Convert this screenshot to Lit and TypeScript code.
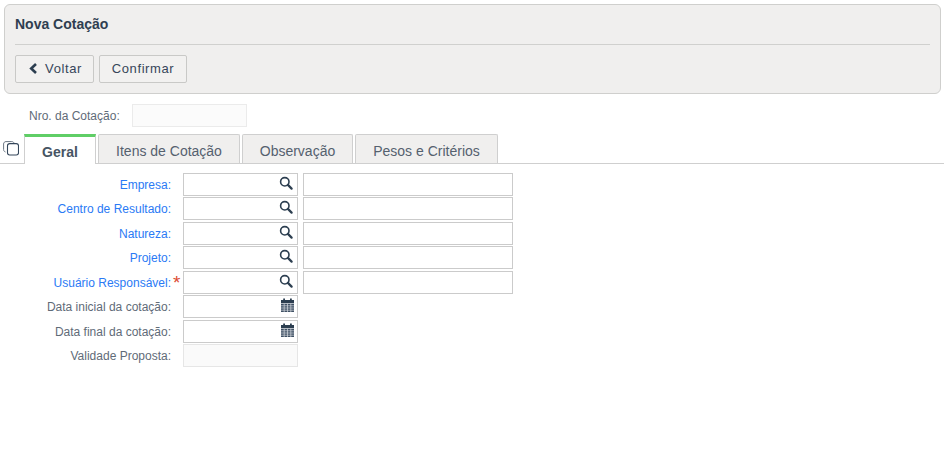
import { LitElement, html, css, svg } from "lit";
import { customElement } from "lit/decorators.js";

const search = svg`<svg class="ico lookup" width="14" height="14" viewBox="0 0 14 14" fill="none"><circle cx="5.8" cy="5.8" r="4.2" stroke="#2c3e50" stroke-width="1.6"/><path d="M8.9 8.9L12.6 12.6" stroke="#2c3e50" stroke-width="2.2" stroke-linecap="round"/></svg>`;
const calendar = svg`<svg class="ico" width="13" height="14" viewBox="0 0 13 14"><path fill="#2c3e50" d="M0 2h2.2V0.6h1.8V2h5V0.6h1.8V2H13v3H0z"/><path fill="#3f5064" d="M0 5.6h13V14H0z"/><path stroke="#d5dae0" stroke-width="0.7" d="M0 7.8h13M0 10h13M0 12.2h13M3.2 5.6V14M6.5 5.6V14M9.8 5.6V14"/></svg>`;
const copy = svg`<svg width="16" height="15" viewBox="0 0 16 15" fill="none"><path d="M2.5 11C1.3 10.6 0.6 9.8 0.6 8.6V3C0.6 1.6 1.6 0.6 3 0.6H8.8C10 0.6 10.8 1.2 11.1 2.3" stroke="#6b7683" stroke-width="1"/><rect x="4.5" y="2.6" width="11" height="11.4" rx="2.2" stroke="#34465a" stroke-width="1.1"/></svg>`;

type Row = { label: string; link?: boolean; req?: boolean; kind: "lookup" | "date" | "off" };
const rows: Row[] = [
  { label: "Empresa:", link: true, kind: "lookup" },
  { label: "Centro de Resultado:", link: true, kind: "lookup" },
  { label: "Natureza:", link: true, kind: "lookup" },
  { label: "Projeto:", link: true, kind: "lookup" },
  { label: "Usuário Responsável:", link: true, req: true, kind: "lookup" },
  { label: "Data inicial da cotação:", kind: "date" },
  { label: "Data final da cotação:", kind: "date" },
  { label: "Validade Proposta:", kind: "off" },
];

@customElement("app-root")
export class AppRoot extends LitElement {
  static styles = css`
    :host { display: block; width: 944px; height: 464px; background: #fff; overflow: hidden;
      font-family: "Liberation Sans", Arial, sans-serif; font-size: 12px; color: #5f6b78; box-sizing: border-box; padding-top: 4px; }
    * { box-sizing: border-box; }
    .panel { margin: 0 3px 0 4px; height: 90px; background: #f0efee; border: 1px solid #cfcfcd; border-radius: 6px; padding: 0 10px; }
    .title { height: 40px; line-height: 39px; font-size: 14px; font-weight: 700; color: #2f3e50; border-bottom: 1px solid #d0d0ce; }
    .btns { display: flex; gap: 5px; margin-top: 10px; }
    button { height: 28px; padding: 0 0 2px; font: 13px "Liberation Sans", Arial, sans-serif; letter-spacing: 0.045em; color: #37465a; background: #f2f1f0; border: 1px solid #c9c9c7; border-radius: 2px; display: flex; align-items: center; justify-content: center; gap: 7px; }
    .back { width: 79px; padding-left: 2px; }
    .confirm { width: 88px; }
    .nro { display: flex; align-items: center; margin-top: 10px; height: 23px; }
    .nro label { width: 132px; padding-left: 29px; color: #5f6b78; white-space: nowrap; line-height: 24px; }
    .nro .box { width: 115px; height: 23px; background: #fbfbfb; border: 1px solid #ebebeb; }
    .tabs { display: flex; align-items: flex-end; height: 30px; margin-top: 7px; border-bottom: 1px solid #cfcfcf; }
    .copy { width: 24px; height: 29px; padding: 7px 0 0 3px; }
    .copy svg { display: block; }
    .tab { height: 29px; background: #f0efee; border: 1px solid #cfcfcf; border-bottom: none; border-radius: 2px 2px 0 0; margin-right: 2px; font-size: 14px; line-height: 32px; text-align: center; color: #55616e; }
    .tab.on { height: 30px; margin-bottom: -1px; background: #fff; border-top: 3px solid #5fce66; border-radius: 0; font-weight: 700; color: #465463; line-height: 30px; }
    .form { display: grid; gap: 1.43px 0; margin-top: 9px; }
    .row { display: flex; height: 23px; }
    .lab { width: 171px; text-align: right; line-height: 25px; position: relative; white-space: nowrap; color: #5f6b78; }
    .lab.link { color: #2a7af5; }
    .req { position: absolute; left: 173px; top: -1px; color: #dc4a32; font-size: 19px; font-weight: 400; line-height: 25px; }
    .inp { margin-left: 12px; width: 115px; height: 23px; border: 1px solid #cbcbcb; background: #fff; display: flex; align-items: center; justify-content: flex-end; padding: 0 3px 3px 0; }
    .inp.off { background: #fafafa; border-color: #e6e6e6; }
    .inp2 { margin-left: 5px; width: 210px; height: 23px; border: 1px solid #cbcbcb; background: #fff; }
    .ico { display: block; }
    .lookup { margin-right: 1px; }
    .chev { display: block; }
  `;

  render() {
    return html`
      <div class="panel">
        <div class="title">Nova Cotação</div>
        <div class="btns">
          <button class="back"><svg class="chev" width="9" height="11" viewBox="0 0 9 11" fill="none"><path d="M7 1L2.2 5.5L7 10" stroke="#2c3e50" stroke-width="2.6"/></svg>Voltar</button>
          <button class="confirm">Confirmar</button>
        </div>
      </div>
      <div class="nro"><label>Nro. da Cotação:</label><div class="box"></div></div>
      <div class="tabs">
        <div class="copy">${copy}</div>
        <div class="tab on" style="width:72px">Geral</div>
        <div class="tab" style="width:142px">Itens de Cotação</div>
        <div class="tab" style="width:111px">Observação</div>
        <div class="tab" style="width:143px">Pesos e Critérios</div>
      </div>
      <div class="form">
        ${rows.map(
          (r) => html`<div class="row">
            <div class="lab ${r.link ? "link" : ""}">${r.label}${r.req ? html`<span class="req">*</span>` : ""}</div>
            <div class="inp ${r.kind === "off" ? "off" : ""}">${r.kind === "lookup" ? search : r.kind === "date" ? calendar : ""}</div>
            ${r.kind === "lookup" ? html`<div class="inp2"></div>` : ""}
          </div>`
        )}
      </div>
    `;
  }
}
